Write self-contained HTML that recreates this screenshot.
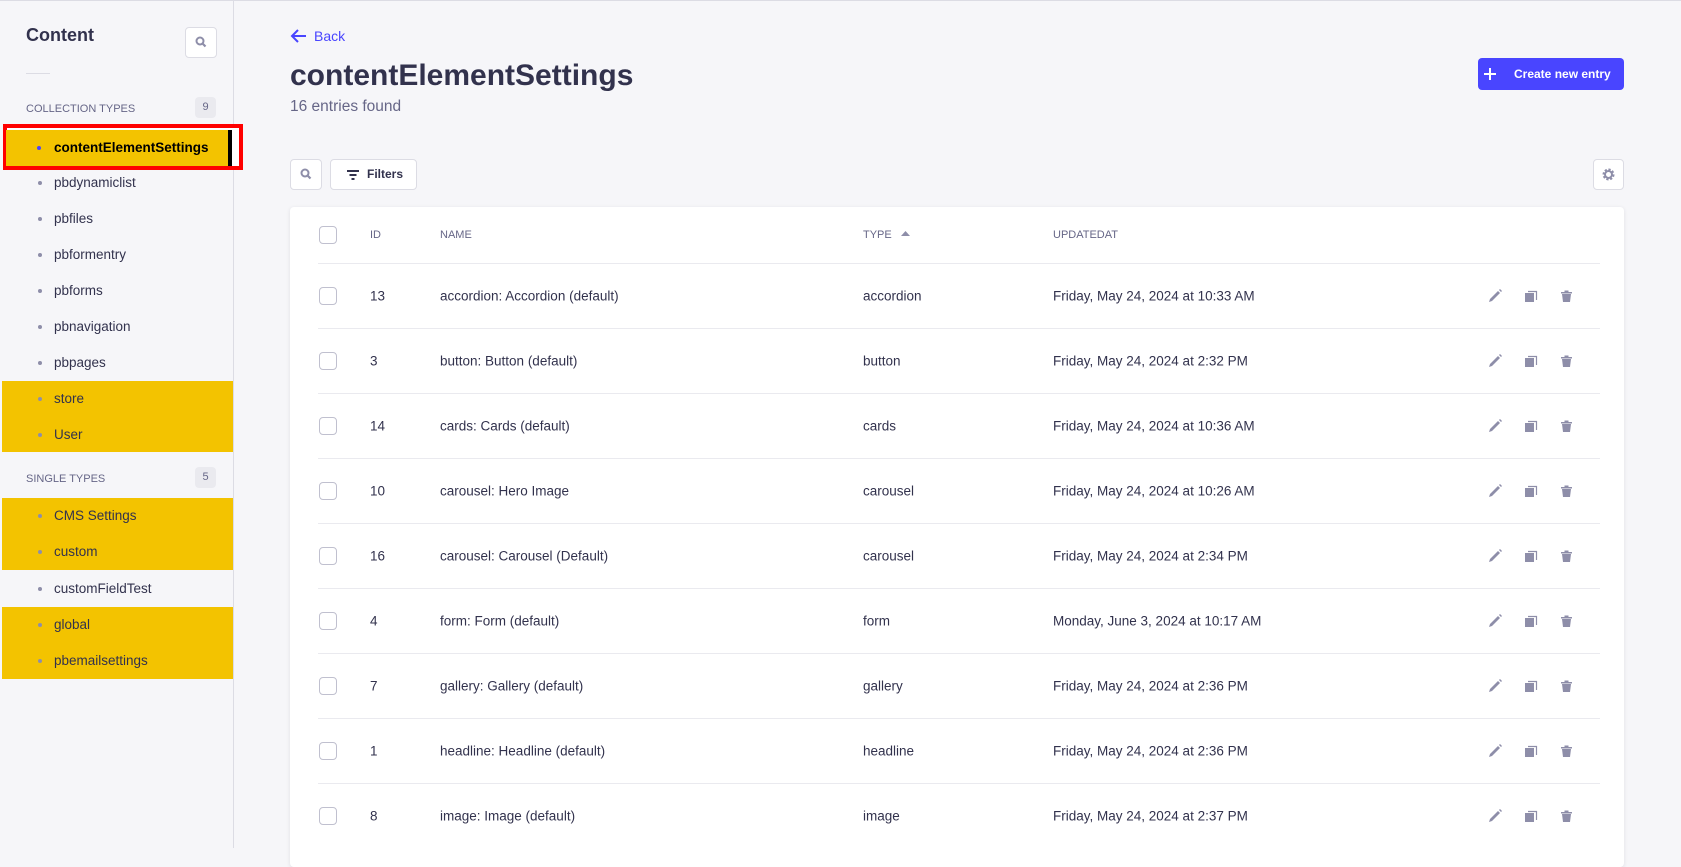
<!DOCTYPE html>
<html><head><style>
*{box-sizing:border-box;margin:0;padding:0}
body{width:1681px;height:847px;overflow:hidden;background:#f6f6f9;font-family:"Liberation Sans",sans-serif;color:#32324d;position:relative;border-top:1px solid #dcdce4}
.sb{position:absolute;left:0;top:0;width:234px;height:847px;background:#f6f6f9;border-right:1px solid #dcdce4}
.abs{position:absolute}
.btn{position:absolute;background:#fff;border:1px solid #dcdce4;border-radius:4px}
.item{position:absolute;left:2px;width:231px;height:36px;font-size:13.5px;color:#32324d;line-height:36px;padding-left:52px}
.item:before{content:"";position:absolute;left:36px;top:16px;width:4px;height:4px;border-radius:50%;background:#8e8ea9}
.y{background:#f3c300}
.sec{position:absolute;left:26px;font-size:11px;color:#666687;text-transform:uppercase}
.badge{position:absolute;left:195px;width:21px;height:21px;background:#eaeaef;border-radius:4px;font-size:11px;color:#666687;text-align:center;line-height:21px}
.card{position:absolute;left:290px;top:206px;width:1334px;height:660px;background:#fff;border-radius:4px;box-shadow:0 1px 4px rgba(33,33,52,.1)}
.row{position:absolute;left:28px;width:1282px;height:65px;border-top:1px solid #eaeaef;font-size:13.5px;color:#32324d}
.row span,.hd span{position:absolute;top:50%;transform:translateY(-50%);white-space:nowrap}
.cb{position:absolute;left:1px;top:50%;margin-top:-9px;width:18px;height:18px;border:1px solid #c0c0cf;border-radius:4px;background:#fff}
.hd{position:absolute;left:28px;top:0;width:1282px;height:56px;font-size:11px;color:#666687}
</style></head><body>
<div class="sb">
 <div class="abs" style="left:26px;top:24px;font-size:18px;font-weight:bold">Content</div>
 <div class="btn" style="left:185px;top:26px;width:32px;height:31px"><svg width="30" height="29" viewBox="0 0 30 29"><circle cx="14" cy="13" r="3.5" fill="none" stroke="#8e8ea9" stroke-width="2"/><path d="M16.5 15.5l3 3" stroke="#8e8ea9" stroke-width="2.2"/></svg></div>
 <div class="abs" style="left:26px;top:72px;width:24px;height:1px;background:#dcdce4"></div>
 <div class="sec" style="top:102px">Collection types</div>
 <div class="badge" style="top:96px">9</div>
 <div class="abs" style="left:3px;top:123px;width:240px;height:46px;border:4px solid #f00;background:#fff"></div>
 <div class="abs y" style="top:129px;left:6px;width:224px;height:36px"></div>
 <div class="abs" style="left:54px;top:129px;height:36px;line-height:36px;font-size:13.5px;color:#000;font-weight:bold">contentElementSettings</div>
 <div class="abs" style="left:37px;top:145px;width:4px;height:4px;border-radius:50%;background:#4945ff"></div>
 <div class="abs" style="left:228px;top:129px;width:4px;height:36px;background:#000"></div>
 <div class="item" style="top:164px">pbdynamiclist</div>
 <div class="item" style="top:200px">pbfiles</div>
 <div class="item" style="top:236px">pbformentry</div>
 <div class="item" style="top:272px">pbforms</div>
 <div class="item" style="top:308px">pbnavigation</div>
 <div class="item" style="top:344px">pbpages</div>
 <div class="item y" style="top:380px">store</div>
 <div class="item y" style="top:416px;height:35px">User</div>
 <div class="sec" style="top:472px">Single types</div>
 <div class="badge" style="top:466px">5</div>
 <div class="item y" style="top:497px">CMS Settings</div>
 <div class="item y" style="top:533px">custom</div>
 <div class="item" style="top:570px">customFieldTest</div>
 <div class="item y" style="top:606px">global</div>
 <div class="item y" style="top:642px">pbemailsettings</div>
</div>
<svg class="abs" style="left:290px;top:27px" width="18" height="16" viewBox="0 0 18 16"><path d="M16 8H3M8 2L2 8l6 6" fill="none" stroke="#4945ff" stroke-width="2"/></svg>
<div class="abs" style="left:314px;top:27px;font-size:14px;color:#4945ff">Back</div>
<div class="abs" style="left:290px;top:58px;font-size:30px;font-weight:bold;color:#32324d">contentElementSettings</div>
<div class="abs" style="left:290px;top:97px;font-size:15.5px;color:#666687">16 entries found</div>
<div class="abs" style="left:1478px;top:57px;width:146px;height:32px;background:#4945ff;border-radius:4px;color:#fff;font-size:12px;font-weight:bold;line-height:32px;padding-left:36px">Create new entry</div>
<svg class="abs" style="left:1483px;top:66px" width="14" height="14"><path d="M7 1v12M1 7h12" stroke="#fff" stroke-width="2"/></svg>
<div class="btn" style="left:290px;top:158px;width:32px;height:31px"><svg width="30" height="29" viewBox="0 0 30 29"><circle cx="14" cy="13" r="3.5" fill="none" stroke="#8e8ea9" stroke-width="2"/><path d="M16.5 15.5l3 3" stroke="#8e8ea9" stroke-width="2.2"/></svg></div>
<div class="btn" style="left:330px;top:158px;width:87px;height:31px;font-size:12px;font-weight:bold;line-height:29px;padding-left:36px">Filters</div>
<svg class="abs" style="left:346px;top:168px" width="14" height="12"><path d="M1 2h12M3.5 6h7M5.5 10h3" stroke="#32324d" stroke-width="2"/></svg>
<div class="btn" style="left:1593px;top:158px;width:31px;height:31px"><svg width="29" height="29" viewBox="0 0 29 29"><circle cx="14.5" cy="14.5" r="4.5" fill="none" stroke="#8e8ea9" stroke-width="3" stroke-dasharray="2 1.5"/><circle cx="14.5" cy="14.5" r="3.5" fill="none" stroke="#8e8ea9" stroke-width="2"/></svg></div>
<div class="card">
 <div class="hd"><div class="cb"></div><span style="left:52px">ID</span><span style="left:122px">NAME</span><span style="left:545px">TYPE</span><svg style="position:absolute;left:583px;top:24px" width="9" height="6"><path d="M0 5L4.5 0 9 5z" fill="#8e8ea9"/></svg><span style="left:735px">UPDATEDAT</span></div>
 <div class="row" style="top:56px"><div class="cb"></div><span style="left:52px">13</span><span style="left:122px">accordion: Accordion (default)</span><span style="left:545px">accordion</span><span style="left:735px">Friday, May 24, 2024 at 10:33 AM</span></div>
 <div class="row" style="top:121px"><div class="cb"></div><span style="left:52px">3</span><span style="left:122px">button: Button (default)</span><span style="left:545px">button</span><span style="left:735px">Friday, May 24, 2024 at 2:32 PM</span></div>
 <div class="row" style="top:186px"><div class="cb"></div><span style="left:52px">14</span><span style="left:122px">cards: Cards (default)</span><span style="left:545px">cards</span><span style="left:735px">Friday, May 24, 2024 at 10:36 AM</span></div>
 <div class="row" style="top:251px"><div class="cb"></div><span style="left:52px">10</span><span style="left:122px">carousel: Hero Image</span><span style="left:545px">carousel</span><span style="left:735px">Friday, May 24, 2024 at 10:26 AM</span></div>
 <div class="row" style="top:316px"><div class="cb"></div><span style="left:52px">16</span><span style="left:122px">carousel: Carousel (Default)</span><span style="left:545px">carousel</span><span style="left:735px">Friday, May 24, 2024 at 2:34 PM</span></div>
 <div class="row" style="top:381px"><div class="cb"></div><span style="left:52px">4</span><span style="left:122px">form: Form (default)</span><span style="left:545px">form</span><span style="left:735px">Monday, June 3, 2024 at 10:17 AM</span></div>
 <div class="row" style="top:446px"><div class="cb"></div><span style="left:52px">7</span><span style="left:122px">gallery: Gallery (default)</span><span style="left:545px">gallery</span><span style="left:735px">Friday, May 24, 2024 at 2:36 PM</span></div>
 <div class="row" style="top:511px"><div class="cb"></div><span style="left:52px">1</span><span style="left:122px">headline: Headline (default)</span><span style="left:545px">headline</span><span style="left:735px">Friday, May 24, 2024 at 2:36 PM</span></div>
 <div class="row" style="top:576px"><div class="cb"></div><span style="left:52px">8</span><span style="left:122px">image: Image (default)</span><span style="left:545px">image</span><span style="left:735px">Friday, May 24, 2024 at 2:37 PM</span></div>
</div>
<svg class="abs" style="left:0;top:0;pointer-events:none" width="1681" height="847">
<defs><g id="ic">
<path d="M0 13l1-3 8-8 2 2-8 8z M10 1l1-1 2 2-1 1z" fill="#8e8ea9"/>
<g transform="translate(36,0)"><rect x="0" y="4" width="9" height="9" fill="#8e8ea9"/><path d="M3 2.5h8.5v8.5" fill="none" stroke="#8e8ea9" stroke-width="1.2"/></g>
<g transform="translate(72,0)"><path d="M0 3h11v1.5H0zM3.5 1.5h4v1.5h-4zM1 5h9l-1 8H2z" fill="#8e8ea9"/></g>
</g></defs>
<use href="#ic" x="1489" y="288"/><use href="#ic" x="1489" y="353"/><use href="#ic" x="1489" y="418"/><use href="#ic" x="1489" y="483"/><use href="#ic" x="1489" y="548"/><use href="#ic" x="1489" y="613"/><use href="#ic" x="1489" y="678"/><use href="#ic" x="1489" y="743"/><use href="#ic" x="1489" y="808"/>
</svg>
</body></html>
